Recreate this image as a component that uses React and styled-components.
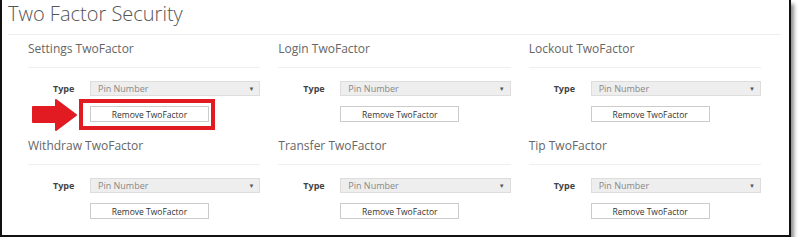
import React from 'react'
import styled, { createGlobalStyle } from 'styled-components'

const GlobalStyle = createGlobalStyle`
    html, body {
        margin: 0;
        padding: 0;
        background: #fff;
    }
    body {
        font-family: "Open Sans", "Liberation Sans", sans-serif;
    }
`

const Frame = styled.div`
    width: 791px;
    height: 237px;
    border: 2px solid #111;
    border-top: none;
    box-shadow: 3px 4px 4px rgba(0, 0, 0, 0.45);
    background: #fff;
    padding: 0 8px 0 6px;
    box-sizing: border-box;
    overflow: hidden;
`

const Title = styled.h1`
    margin: 0;
    padding-top: 0;
    font-size: 20px;
    line-height: 28px;
    font-weight: 300;
    color: #555;
    border-bottom: 1px solid #eee;
    padding-bottom: 6px;
`

const Grid = styled.div`
    display: grid;
    grid-template-columns: repeat(3, 1fr);
    column-gap: 18px;
    padding: 0 20px;
`

const Card = styled.div`
    position: relative;
    height: ${p => (p.$last ? 'auto' : '97px')};
`

const CardTitle = styled.h2`
    margin: 0;
    padding-top: 3px;
    height: 29px;
    font-size: 12px;
    line-height: 22px;
    font-weight: 400;
    color: #666;
    border-bottom: 1px solid #eee;
`

const Row = styled.div`
    display: grid;
    grid-template-columns: 62px 1fr;
    align-items: center;
    margin-top: ${p => p.$gap}px;
`

const Label = styled.label`
    padding-left: 25px;
    font-size: 9px;
    font-weight: 700;
    color: #444;
`

const Select = styled.div`
    height: 13px;
    display: flex;
    align-items: center;
    justify-content: space-between;
    padding: 0 5px 0 7px;
    background: #eee;
    border: 1px solid #ddd;
    font-size: 9px;
    color: #888;
`

const Caret = styled.span`
    font-size: 6px;
    color: #555;
`

const Button = styled.div`
    grid-column: 2;
    width: 117px;
    height: 14px;
    display: flex;
    align-items: center;
    justify-content: center;
    border: 1px solid #ccc;
    background: #fff;
    font-size: 8.5px;
    color: #333;
`

const Highlight = styled.div`
    position: absolute;
    left: 51px;
    top: 64px;
    width: 136px;
    height: 31px;
    border: 4px solid #e21b23;
    box-sizing: border-box;
`

const Arrow = styled.svg`
    position: absolute;
    left: 4px;
    top: 64px;
`

const cards = [
    'Settings TwoFactor',
    'Login TwoFactor',
    'Lockout TwoFactor',
    'Withdraw TwoFactor',
    'Transfer TwoFactor',
    'Tip TwoFactor',
]

const TwoFactorCard = ({ title, marked, last }) => (
    <Card $last={last}>
        <CardTitle>{title}</CardTitle>
        <Row $gap={13}>
            <Label>Type</Label>
            <Select>
                <span>Pin Number</span>
                <Caret>▼</Caret>
            </Select>
        </Row>
        <Row $gap={10}>
            <Button>Remove TwoFactor</Button>
        </Row>
        {marked && (
            <>
                <Arrow width="46" height="32" viewBox="0 0 46 32">
                    <polygon
                        points="1,8 24,8 24,1 44,16 24,31 24,23 1,23"
                        fill="#e21b23"
                        stroke="#e21b23"
                        strokeWidth="2"
                        strokeLinejoin="round"
                    />
                </Arrow>
                <Highlight />
            </>
        )}
    </Card>
)

const App = () => (
    <>
        <GlobalStyle />
        <Frame>
            <Title>Two Factor Security</Title>
            <Grid>
                {cards.map((c, i) => (
                    <TwoFactorCard key={c} title={c} marked={i === 0} last={i > 2} />
                ))}
            </Grid>
        </Frame>
    </>
)

export default App
